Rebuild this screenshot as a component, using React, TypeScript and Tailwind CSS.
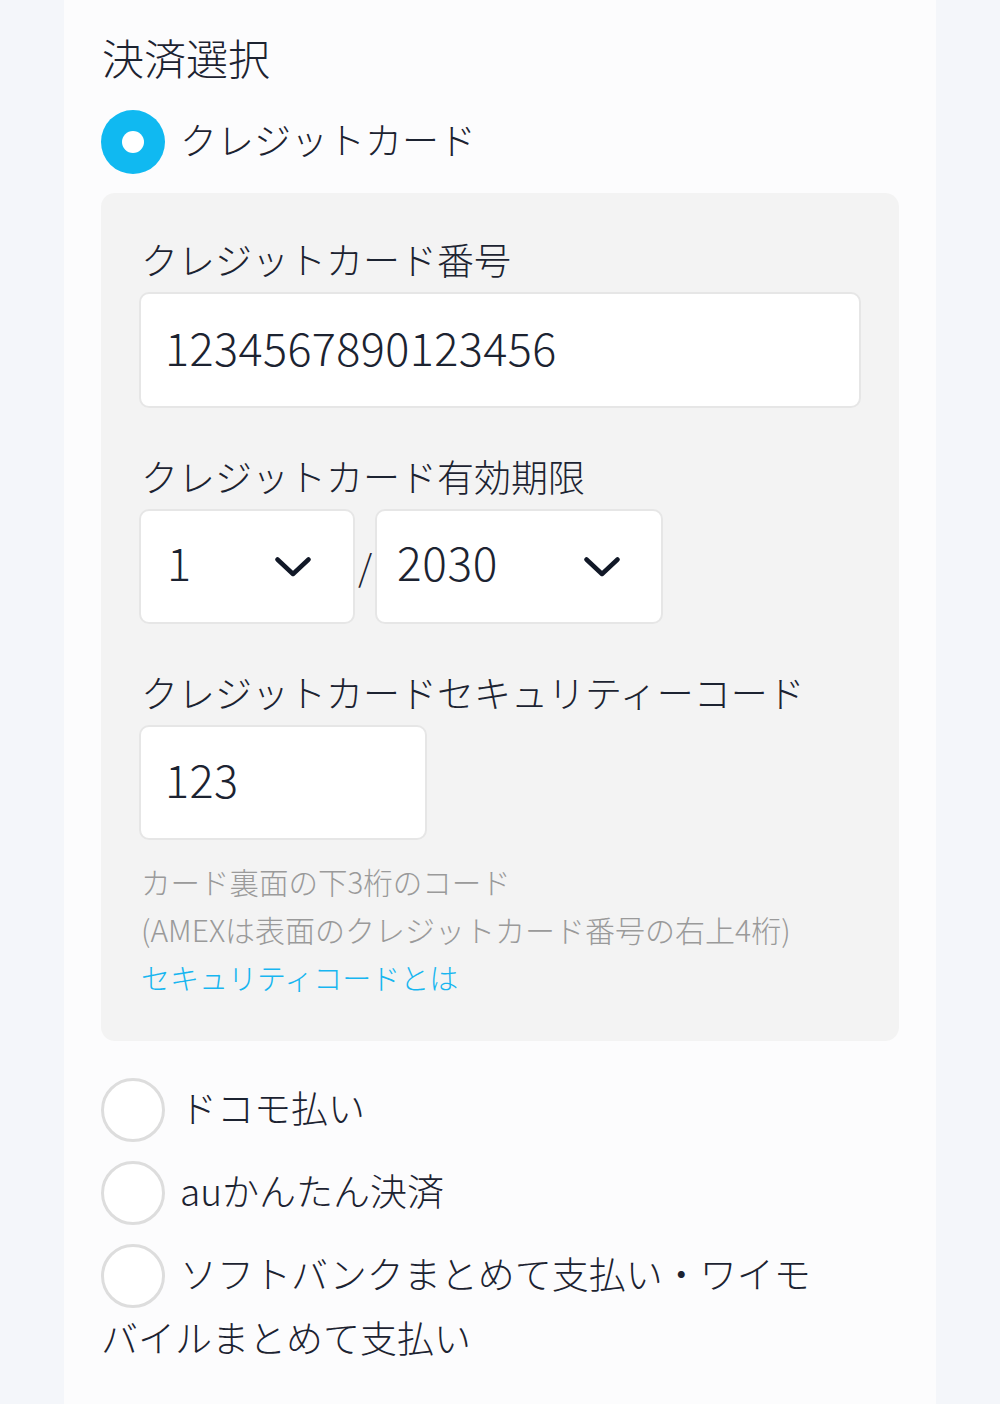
import React, { useState } from "react";

const font = "font-['Noto_Sans_CJK_JP','Noto_Sans',sans-serif]";

const Chevron: React.FC = () => (
  <svg width="36" height="20" viewBox="0 0 36 20" fill="none" className="shrink-0">
    <path d="M2.5 2.5 L18 17 L33.5 2.5" stroke="#111827" strokeWidth="4.5" strokeLinecap="round" strokeLinejoin="round" />
  </svg>
);

const Radio: React.FC<{ checked: boolean }> = ({ checked }) =>
  checked ? (
    <span className="inline-flex h-16 w-16 shrink-0 items-center justify-center rounded-full bg-[#10b9f1] align-top">
      <span className="h-[22px] w-[22px] rounded-full bg-white" />
    </span>
  ) : (
    <span className="inline-block h-16 w-16 shrink-0 rounded-full border-[3px] border-[#dddddd] bg-white align-top" />
  );

const App: React.FC = () => {
  const [method, setMethod] = useState<string>("card");
  const [cardNumber, setCardNumber] = useState<string>("1234567890123456");
  const [month, setMonth] = useState<string>("1");
  const [year, setYear] = useState<string>("2030");
  const [cvc, setCvc] = useState<string>("123");

  // other payment methods below the card panel
  const others = [
    { id: "docomo", label: "ドコモ払い" },
    { id: "au", label: "auかんたん決済" },
    { id: "softbank", label: "ソフトバンクまとめて支払い・ワイモバイルまとめて支払い" },
  ];

  return (
    <div className={`min-h-screen bg-[#f4f6fa] ${font} font-light text-[#1c2331]`}>
      <div className="ml-16 min-h-[1404px] w-[872px] bg-[#fcfcfd] px-[37px] pt-[27px]">
        <h2 className="pl-px text-[42px] leading-[60px]">決済選択</h2>

        {/* Credit card */}
        <label className="mt-[23px] mb-[19px] block text-[37px] leading-[58px]" onClick={() => setMethod("card")}>
          <Radio checked={method === "card"} />
          <span className="ml-[15px]">クレジットカード</span>
        </label>

        <div className="rounded-[14px] bg-[#f3f3f3] px-[38px] pt-[39px] pb-[40px]">
          <p className="pl-[2px] text-[37px] leading-[54px]">クレジットカード番号</p>
          <input
            value={cardNumber}
            onChange={(e) => setCardNumber(e.target.value)}
            className="mt-[6px] block h-[116px] w-full rounded-[10px] border-2 border-[#e6e6e6] bg-white px-[24px] pb-[8px] text-[45px] font-light tracking-[0.4px] text-[#1c2331] outline-none"
          />

          <p className="mt-[41px] pl-[2px] text-[37px] leading-[54px]">クレジットカード有効期限</p>
          <div className="mt-[6px] flex items-center">
            <div className="flex h-[115px] w-[216px] items-center justify-between rounded-[10px] border-2 border-[#e6e6e6] bg-white pr-[42px] pl-[26px]">
              <span className="pb-[10px] text-[45px] tracking-[0.4px]">{month}</span>
              <Chevron />
            </div>
            <span className="w-5 pb-[4px] text-center text-[36px] leading-none" onClick={() => setMonth(month)}>/</span>
            <div className="flex h-[115px] w-[288px] items-center justify-between rounded-[10px] border-2 border-[#e6e6e6] bg-white pr-[41px] pl-[20px]">
              <span className="pb-[10px] text-[46px] tracking-[0.6px]" onClick={() => setYear(year)}>{year}</span>
              <Chevron />
            </div>
          </div>

          <p className="mt-[41px] pl-[2px] text-[37px] leading-[54px]">クレジットカードセキュリティーコード</p>
          <input
            value={cvc}
            onChange={(e) => setCvc(e.target.value)}
            className="mt-[6px] block h-[115px] w-[288px] rounded-[10px] border-2 border-[#e6e6e6] bg-white px-[24px] pb-[8px] text-[45px] font-light tracking-[0.4px] text-[#1c2331] outline-none"
          />

          <div className="mt-[17px] pl-[2px] leading-[48px]">
            <p className="text-[29.5px] text-[#9a9a9a]">カード裏面の下3桁のコード</p>
            <p className="text-[30px] text-[#9a9a9a]">(AMEXは表面のクレジットカード番号の右上4桁)</p>
            <a className="block text-[29px] text-[#17b6f0]">セキュリティコードとは</a>
          </div>
        </div>

        <div className="mt-[37px] max-w-[730px]">
          {others.map((o) => (
            <label key={o.id} className="mb-[19px] block text-[37px] leading-[58px]" onClick={() => setMethod(o.id)}>
              <Radio checked={method === o.id} />
              <span className="ml-[15px]">{o.label}</span>
            </label>
          ))}
        </div>
      </div>
    </div>
  );
};

export default App;
